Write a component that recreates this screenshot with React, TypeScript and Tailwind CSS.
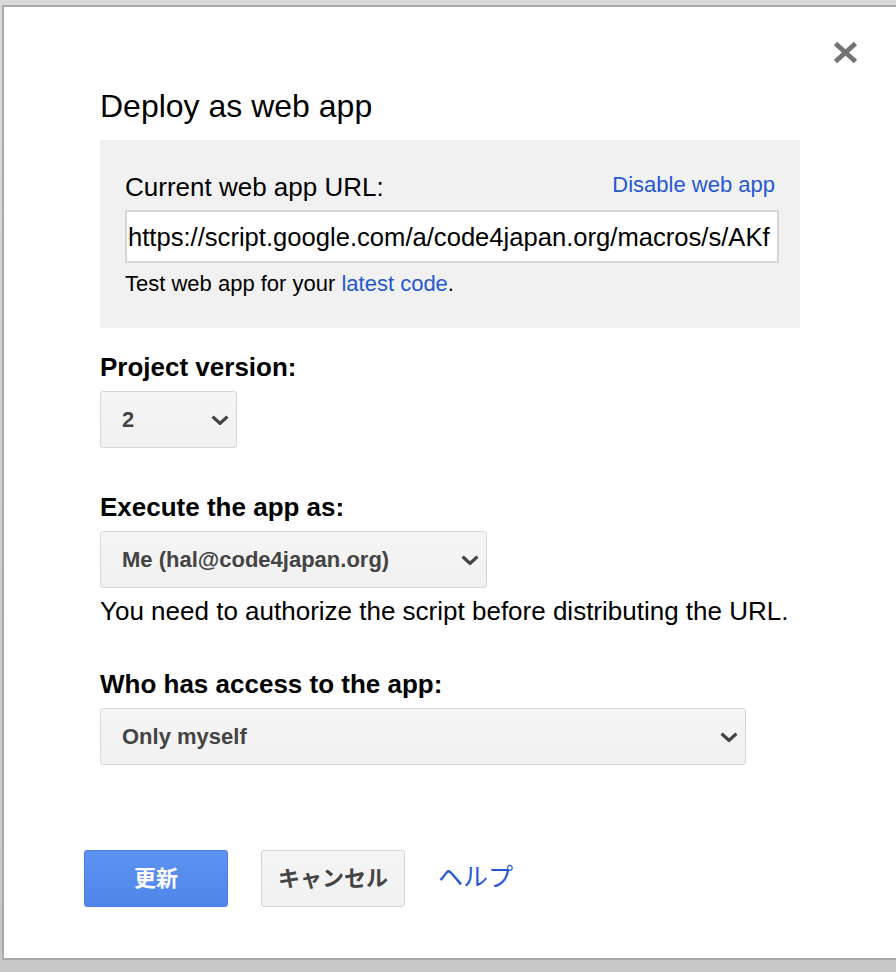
import React from "react";

const FONT = { fontFamily: '"Liberation Sans", Arial, "Noto Sans CJK JP", sans-serif' };

function Chevron() {
  return (
    <svg width="18" height="10" viewBox="0 0 18 10" fill="none" className="shrink-0">
      <path d="M1.6 1.6 L9 8.4 L16.4 1.6" stroke="#444444" strokeWidth="3.3" strokeLinecap="butt" strokeLinejoin="miter" />
    </svg>
  );
}

function Select({ width, value }: { width: string; value: string }) {
  return (
    <div
      className={`${width} h-[57px] mt-[9px] flex items-center justify-between rounded-[3px] border border-[#d6d6d6] bg-linear-to-b from-[#f5f5f5] to-[#f1f1f1] pl-[21px] pr-[7px] text-[22px] font-bold text-[#444444]`}
    >
      <span className="leading-[26px]">{value}</span>
      <Chevron />
    </div>
  );
}

export default function App() {
  return (
    <div
      className="w-[896px] h-[972px] overflow-hidden bg-linear-to-b from-[#dadada] to-[#c7c7c7] pt-[5px] pl-[2px]"
      style={FONT}
    >
      <div className="relative h-[955px] bg-white border-2 border-r-0 border-[#a9a9a9] pl-[96px] pt-[81px] text-black">
        <button className="absolute top-[34px] right-[38px] w-[25px] h-[23px]" aria-label="Close">
          <svg width="25" height="23" viewBox="0 0 25 23" className="blur-[0.4px]">
            <path d="M2.5 2.5 L22.5 20.5 M22.5 2.5 L2.5 20.5" stroke="#737373" strokeWidth="4.8" strokeLinecap="butt" />
          </svg>
        </button>

        <h1 className="text-[32px] leading-[36px] font-normal">Deploy as web app</h1>

        <div className="mt-[16px] w-[700px] h-[188px] bg-[#f1f1f1] pt-[32px] pl-[25px] pr-[21px]">
          <div className="flex items-start justify-between">
            <span className="text-[26px] leading-[30px]">Current web app URL:</span>
            <a className="text-[22px] leading-[26px] text-[#2559d4] pr-[4px] cursor-pointer">Disable web app</a>
          </div>
          <div className="mt-[8px] h-[53px] border-2 border-[#d6d6d6] bg-white flex items-center pl-px overflow-hidden whitespace-nowrap text-[25.6px] leading-[30px]">
            https://script.google.com/a/code4japan.org/macros/s/AKf
          </div>
          <p className="mt-[8px] text-[22px] leading-[26px]">
            Test web app for your <a className="text-[#2559d4] cursor-pointer">latest code</a>.
          </p>
        </div>

        <div className="mt-[24px] text-[26px] leading-[30px] font-bold">Project version:</div>
        <Select width="w-[137px]" value="2" />

        <div className="mt-[44px] text-[26px] leading-[30px] font-bold">Execute the app as:</div>
        <Select width="w-[387px]" value="Me (hal@code4japan.org)" />
        <p className="mt-[8px] text-[26px] leading-[30px]">
          You need to authorize the script before distributing the URL.
        </p>

        <div className="mt-[43px] text-[26px] leading-[30px] font-bold">Who has access to the app:</div>
        <Select width="w-[646px]" value="Only myself" />

        <div className="mt-[85px] -ml-[16px] flex items-center">
          <button className="w-[144px] h-[57px] rounded-[3px] border border-[#4a7fe3] bg-linear-to-b from-[#5c93f3] to-[#4f86e7] text-white text-[22px] font-bold leading-[26px]">
            更新
          </button>
          <button className="ml-[33px] w-[144px] h-[57px] rounded-[3px] border border-[#d3d3d3] bg-linear-to-b from-[#f5f5f5] to-[#f1f1f1] text-[#444444] text-[22px] font-bold leading-[26px]">
            キャンセル
          </button>
          <a className="ml-[33px] -mt-[4px] text-[25px] leading-[30px] text-[#2559d4] cursor-pointer">ヘルプ</a>
        </div>
      </div>
    </div>
  );
}
